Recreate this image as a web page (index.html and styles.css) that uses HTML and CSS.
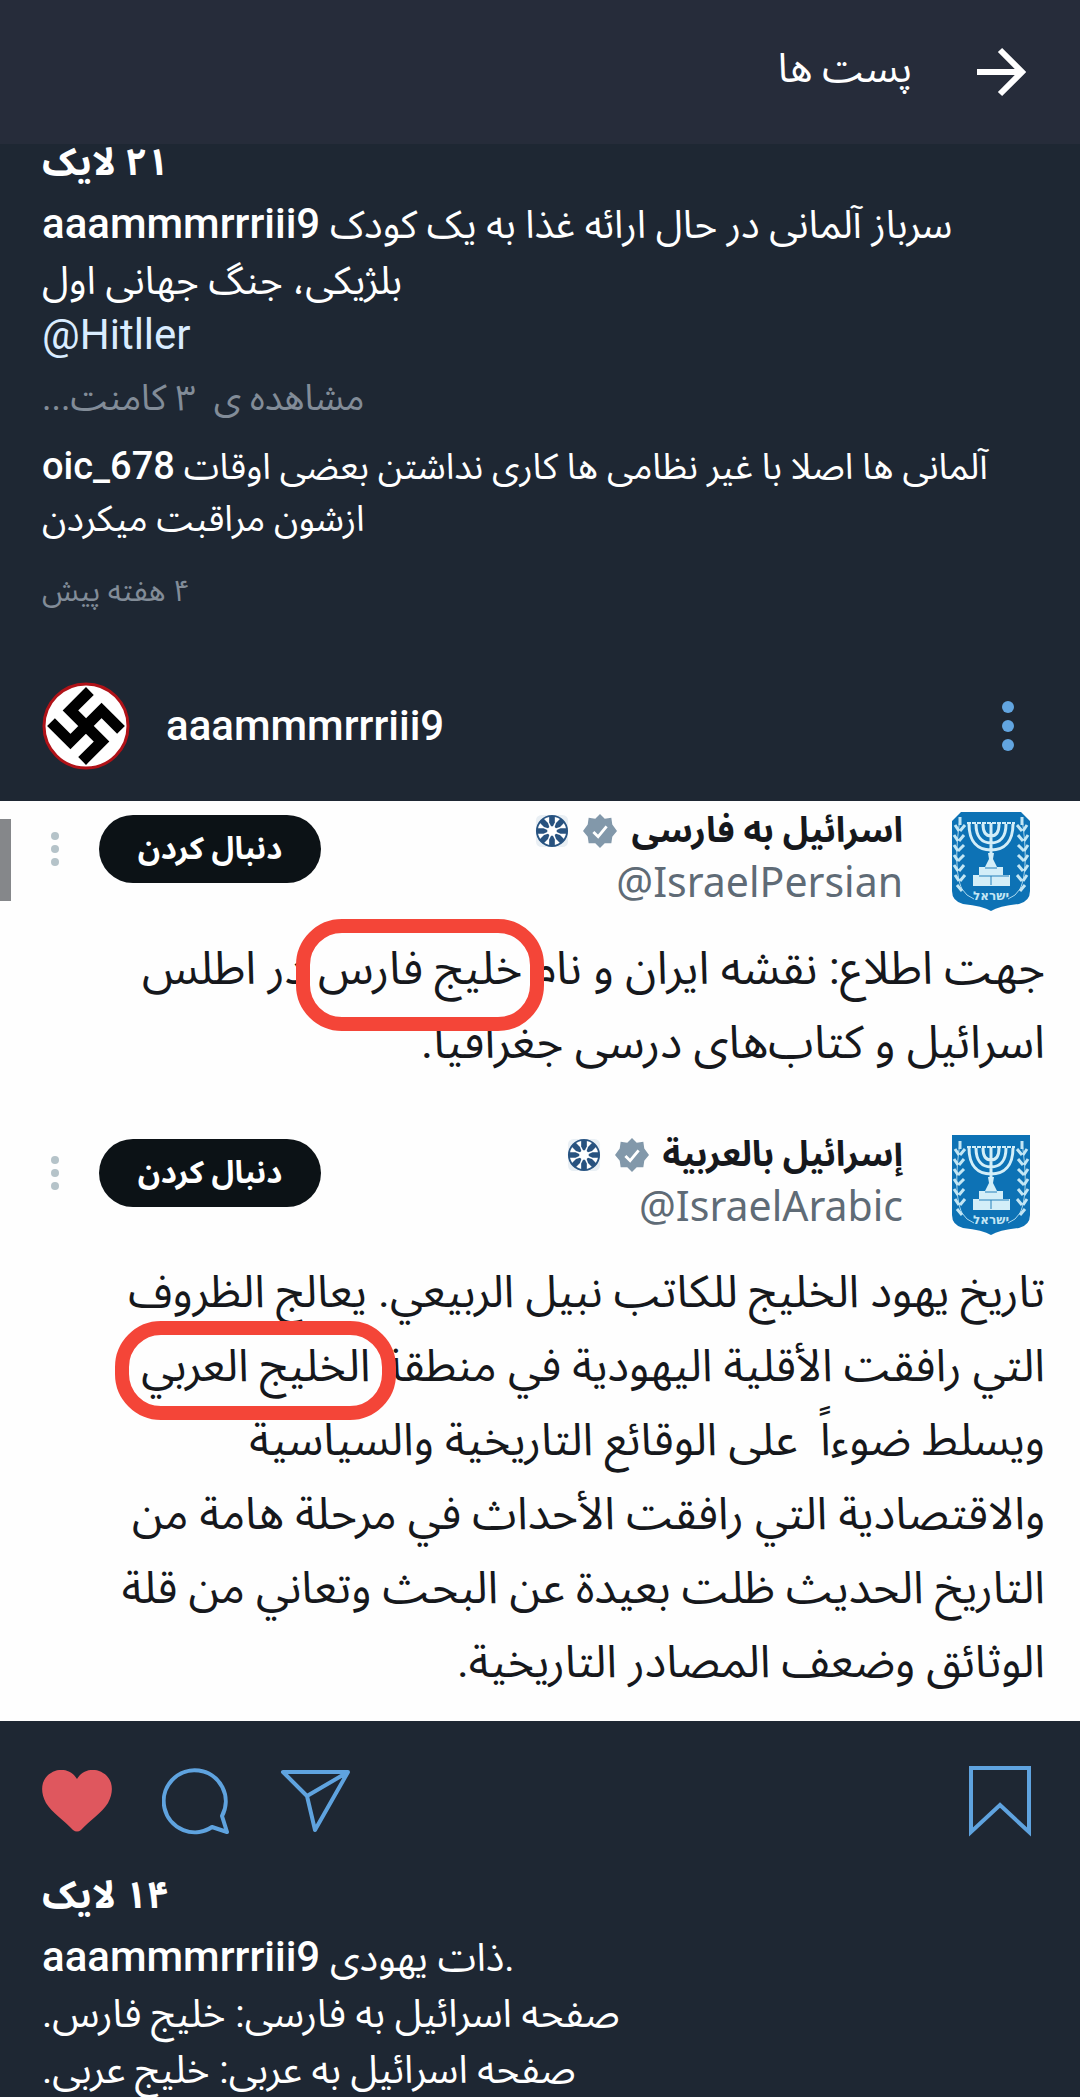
FILE: index.html
```html
<!DOCTYPE html>
<html lang="fa">
<head>
<meta charset="utf-8">
<meta name="viewport" content="width=device-width, initial-scale=1">
<title>پست ها</title>
<link rel="stylesheet" href="styles.css">
</head>
<body>
<svg class="defs" width="0" height="0" aria-hidden="true">
  <symbol id="verified" viewBox="0 0 36 36">
    <path fill="#8298aa" d="M18 0l5 5 7-1 1 7 5 7-5 6-1 7-7 0-5 5-5-5-7 0-1-7-5-6 5-7 1-7 7 1z"/>
    <path fill="none" stroke="#fff" stroke-width="3" d="M11 19l5 5 9-11"/>
  </symbol>
  <symbol id="affiliate" viewBox="0 0 36 36">
    <rect x="1" y="1" width="34" height="34" rx="6" fill="#e9eff4"/>
    <circle cx="18" cy="18" r="16" fill="#fff" stroke="#2a5684" stroke-width="2"/>
    <g fill="#28527f">
      <path id="w" d="M15 2h6v7l-2 4h-2l-2-4z"/>
      <use href="#w" transform="rotate(45 18 18)"/>
      <use href="#w" transform="rotate(90 18 18)"/>
      <use href="#w" transform="rotate(135 18 18)"/>
      <use href="#w" transform="rotate(180 18 18)"/>
      <use href="#w" transform="rotate(225 18 18)"/>
      <use href="#w" transform="rotate(270 18 18)"/>
      <use href="#w" transform="rotate(315 18 18)"/>
    </g>
  </symbol>
  <symbol id="emblem-art" viewBox="0 0 80 100">
    <g fill="none" stroke="#d3eef8" stroke-width="3">
      <path d="M18 13c0 18 9 26 22 26s22-8 22-26M25 13c0 13 6 19 15 19s15-6 15-19M32 13c0 8 3 12 8 12s8-4 8-12M40 12v44" />
      <path stroke-width="2" stroke-dasharray="4 1" d="M16 12h48"/>
    </g>
    <path fill="#d3eef8" d="M37 42h6l-1 6 4 8h6v8h7v11H22V64h6v-8h6l4-8z"/>
    <path fill="none" stroke="#2580bb" d="M28 65h30M40 65v9M34 57h12"/>
    <g id="branch">
      <path fill="none" stroke="#a9d8ee" stroke-width="1" d="M9 8C4 40 5 66 11 78q4 7 12 10"/>
      <path fill="none" stroke="#c3e6f4" stroke-width="3" d="M9 6v8M8 20l-4-6M9 20l5-6M7 30l-4-6M8 30l5-6M7 40l-4-6M7 40l6-6M7 50l-4-6M7 50l6-6M7 60l-4-6M8 60l5-6M8 70l-4-6M9 70l5-6M11 80l-5-6"/>
    </g>
    <use href="#branch" transform="matrix(-1 0 0 1 80 0)"/>
    <text x="40" y="89" text-anchor="middle" font-family="DejaVu Sans, sans-serif" font-size="12" font-weight="bold" fill="#c3e6f4">ישראל</text>
  </symbol>
</svg>

<header class="topbar" dir="rtl">
  <button class="icon-btn" aria-label="بازگشت">
    <svg width="50" height="50" viewBox="0 0 50 50"><path d="M1 25h45M24 3l22 22-22 22" fill="none" stroke="#fff" stroke-width="6"/></svg>
  </button>
  <h1>پست ها</h1>
</header>

<main>
  <article class="post">
    <div class="details">
      <p class="likes" dir="rtl">۲۱ لایک</p>
      <div class="caption">
        <p dir="ltr"><a class="user" href="#">aaammmrrriii9</a> سرباز آلمانی در حال ارائه غذا به یک کودک</p>
        <p dir="rtl">بلژیکی، جنگ جهانی اول</p>
        <p class="latin" dir="ltr"><a class="mention" href="#">@Hitller</a></p>
      </div>
      <a class="more" href="#" dir="rtl">مشاهده ی&nbsp; ۳ کامنت...</a>
      <div class="comment">
        <p dir="ltr"><a class="user" href="#">oic_678</a> آلمانی ها اصلا با غیر نظامی ها کاری نداشتن بعضی اوقات</p>
        <p dir="rtl">ازشون مراقبت میکردن</p>
      </div>
      <p class="time" dir="rtl">۴ هفته پیش</p>
    </div>
  </article>

  <article class="post">
    <div class="author">
      <svg class="avatar" width="88" height="88" viewBox="0 0 88 88" aria-hidden="true">
        <circle cx="44" cy="44" r="42" fill="#fff" stroke="#b01218" stroke-width="3"/>
        <g transform="translate(44 44) rotate(45) scale(11)" fill="none" stroke="#000"><path d="M-2-2.5V0H2V2.5M2.500-2H0V2H-2.500"/></g>
      </svg>
      <a class="user name" href="#">aaammmrrriii9</a>
      <button class="icon-btn" aria-label="گزینه ها">
        <svg width="16" height="52" viewBox="0 0 16 52" fill="#62a5e0"><circle cx="8" cy="7" r="6"/><circle cx="8" cy="26" r="6"/><circle cx="8" cy="45" r="6"/></svg>
      </button>
    </div>

    <div class="picture" dir="rtl">
      <span class="edge"></span>
      <section class="tweet">
        <div class="head">
          <svg class="emblem" width="80" height="100" viewBox="0 0 80 100" aria-hidden="true"><path fill="#0d72b5" d="M10 1h60l9 9v70q0 10-11 13-20 2-28 7-8-5-28-7-11-3-11-13V10z"/><use href="#emblem-art"/></svg>
          <div class="who">
            <div class="title"><strong>اسرائیل به فارسی</strong><svg width="34" height="34"><use href="#verified"/></svg><svg width="34" height="34"><use href="#affiliate"/></svg></div>
            <a class="handle" dir="ltr" href="#">@IsraelPersian</a>
          </div>
          <button class="follow">دنبال کردن</button>
          <button class="icon-btn" aria-label="بیشتر"><svg width="8" height="36" viewBox="0 0 8 36" fill="#b5c3c9"><circle cx="4" cy="5" r="4"/><circle cx="4" cy="18" r="4"/><circle cx="4" cy="31" r="4"/></svg></button>
        </div>
        <div class="body">
          <p>جهت اطلاع: نقشه ایران و نام <mark class="tall">خلیج فارس</mark> در اطلس</p>
          <p>اسرائیل و کتاب‌های درسی جغرافیا.</p>
        </div>
      </section>
      <section class="tweet" lang="ar">
        <div class="head">
          <svg class="emblem" width="80" height="100" viewBox="0 0 80 100" aria-hidden="true"><path fill="#0d72b5" d="M1 0h78v80q0 10-11 13-20 2-28 7-8-5-28-7-11-3-11-13z"/><use href="#emblem-art"/></svg>
          <div class="who">
            <div class="title"><strong>إسرائيل بالعربية</strong><svg width="34" height="34"><use href="#verified"/></svg><svg width="34" height="34"><use href="#affiliate"/></svg></div>
            <a class="handle" dir="ltr" href="#">@IsraelArabic</a>
          </div>
          <button class="follow" lang="fa">دنبال کردن</button>
          <button class="icon-btn" aria-label="بیشتر"><svg width="8" height="36" viewBox="0 0 8 36" fill="#b5c3c9"><circle cx="4" cy="5" r="4"/><circle cx="4" cy="18" r="4"/><circle cx="4" cy="31" r="4"/></svg></button>
        </div>
        <div class="body arabic">
          <p>تاريخ يهود الخليج للكاتب نبيل الربيعي. يعالج الظروف</p>
          <p>التي رافقت الأقلية اليهودية في منطقة <mark>الخليج العربي</mark></p>
          <p>ويسلط ضوءاً&nbsp; على الوقائع التاريخية والسياسية</p>
          <p>والاقتصادية التي رافقت الأحداث في مرحلة هامة من</p>
          <p>التاريخ الحديث ظلت بعيدة عن البحث وتعاني من قلة</p>
          <p>الوثائق وضعف المصادر التاريخية.</p>
        </div>
      </section>
    </div>

    <div class="actions">
      <button class="icon-btn" aria-label="لایک"><svg width="70" height="62" viewBox="0 0 70 62"><path fill="#df575e" d="M31 60C22 50 10 43 4 33-3 20 0 8 9 3c9-6 21-3 26 6C40 0 52-3 61 3c9 5 12 17 5 30-6 10-18 17-27 27q-4 3-8 0z"/></svg></button>
      <button class="icon-btn" aria-label="کامنت"><svg width="68" height="68" viewBox="0 0 68 68"><path fill="none" stroke="#5fa3df" stroke-width="4" stroke-linejoin="round" d="M60 49A31 31 0 1 0 50 60l15 5z"/></svg></button>
      <button class="icon-btn" aria-label="ارسال"><svg width="72" height="66" viewBox="0 0 72 66"><path fill="none" stroke="#5fa3df" stroke-width="4" stroke-linejoin="round" d="M3 4h65L35 62l-8-34zM27 28L68 4"/></svg></button>
      <button class="icon-btn save" aria-label="ذخیره"><svg width="62" height="72" viewBox="0 0 62 72"><path fill="none" stroke="#5fa3df" stroke-width="4" d="M2 3h58v64L31 40 2 67z"/></svg></button>
    </div>

    <div class="details">
      <p class="likes" dir="rtl">۱۴ لایک</p>
      <div class="caption">
        <p dir="ltr"><a class="user" href="#">aaammmrrriii9</a> ذات یهودی.</p>
        <p dir="rtl">صفحه اسرائیل به فارسی: خلیج فارس.</p>
        <p dir="rtl">صفحه اسرائیل به عربی: خلیج عربی.</p>
      </div>
    </div>
  </article>
</main>
</body>
</html>
```
FILE: styles.css
```css
* { box-sizing: border-box; margin: 0; }

body {
  background: #1e2733;
  color: #fff;
  font-family: Roboto, "Noto Sans Arabic", "Noto Naskh Arabic", "DejaVu Sans", sans-serif;
  font-size: 36px;
  line-height: 56px;
  overflow-x: hidden;
}

a { color: inherit; text-decoration: none; }
button { font: inherit; border: 0; padding: 0; background: none; color: inherit; }
svg { display: block; flex: none; }
.defs { position: absolute; }
.icon-btn { flex: none; }

.topbar {
  display: flex;
  align-items: center;
  gap: 64px;
  height: 144px;
  padding: 0 54px;
  background: #262c3a;
}
.topbar h1 { padding-bottom: 6px; font-size: 40px; font-weight: 400; }

.details { padding: 0 42px; }
.details p, .more { text-align: left; white-space: nowrap; }
.likes { font-size: 38px; font-weight: 700; line-height: 36px; padding-bottom: 16px; }
.caption { font-size: 39px; }
.user { font-size: 42px; font-weight: 500; }
.comment .user { font-size: 38px; }
.latin { line-height: 52px; }
.mention { font-size: 42px; color: #d9ecff; }
.more { display: block; margin-top: 8px; color: #828c98; }
.comment { margin-top: 14px; line-height: 52px; }
.time { margin-top: 18px; font-size: 30px; color: #828c98; }

.author {
  display: flex;
  align-items: center;
  gap: 36px;
  height: 150px;
  margin-top: 32px;
  padding: 0 64px 0 42px;
}
.author .name { flex: 1; }

.picture {
  position: relative;
  background: #fefefe;
  color: #16181c;
  padding: 10px 35px 22px 51px;
}
.edge { position: absolute; left: 0; top: 18px; width: 11px; height: 82px; background: #85878a; }
.tweet + .tweet { margin-top: 56px; }
.head { display: flex; align-items: flex-start; padding-right: 14px; }
.who { flex: 1; padding-right: 48px; }
.title { display: flex; align-items: center; gap: 14px; height: 40px; font-size: 35px; }
.handle { display: block; font-family: "Noto Sans", sans-serif; font-size: 41px; line-height: 60px; color: #5f6b76; text-align: right; }
.follow {
  width: 222px;
  height: 68px;
  margin: 4px 0 0 40px;
  border-radius: 34px;
  background: #0c1216;
  color: #fff;
  font-size: 31px;
  font-weight: 700;
}
.head .icon-btn { margin-top: 20px; }
.body { margin-top: 20px; font-size: 46px; line-height: 74px; }
.body.arabic { font-size: 45px; }
.body p { white-space: nowrap; }
mark { position: relative; background: none; color: inherit; }
mark::after {
  content: "";
  position: absolute;
  inset: -18px -26px -28px;
  border: 14px solid #f44538;
  border-radius: 46px;
}
mark.tall::after { inset: -22px -22px -36px; }

.actions { display: flex; align-items: center; gap: 50px; height: 156px; padding: 4px 49px 0 42px; }
.save { margin-left: auto; }
```
